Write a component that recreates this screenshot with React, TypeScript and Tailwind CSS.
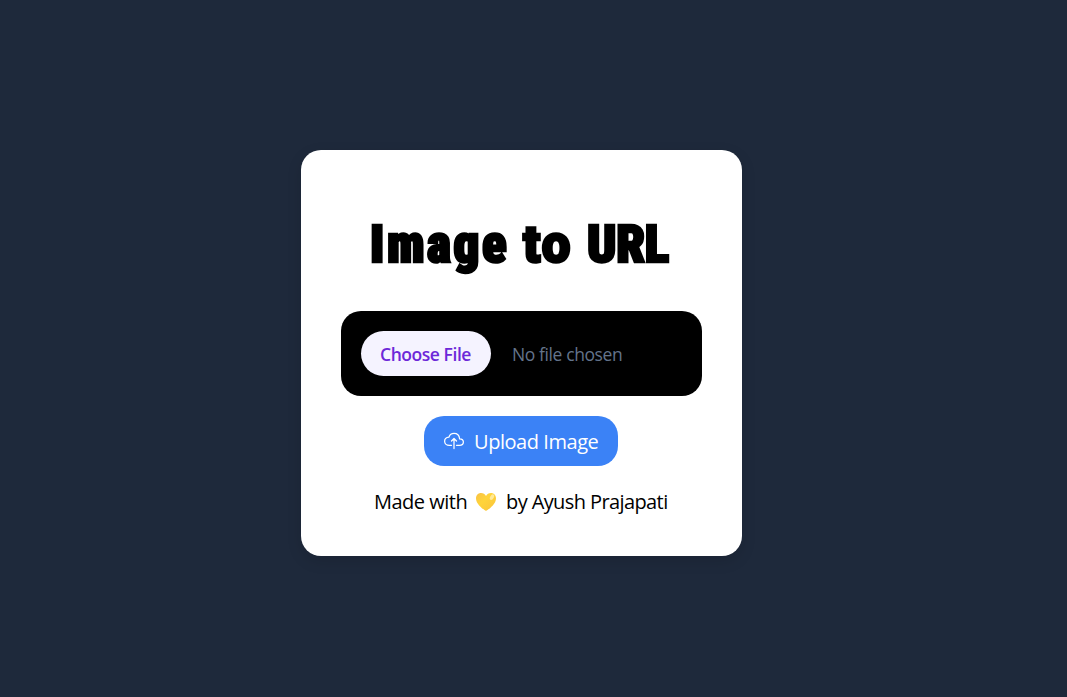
import { IoCloudUploadOutline } from 'react-icons/io5';

function YellowHeart() {
  return (
    <svg viewBox="0 0 22 20" className="w-[22px] h-5 shrink-0" aria-hidden="true">
      <defs>
        <linearGradient id="heart" x1="0" y1="0" x2="1" y2="1">
          <stop offset="0" stopColor="#f8c146" />
          <stop offset="0.4" stopColor="#ffd43a" />
          <stop offset="1" stopColor="#f9c33c" />
        </linearGradient>
      </defs>
      <path
        d="M11 19C9.7 18.2 1 12.6 1 6.4C1 3.2 3.2 1 6 1C8.3 1 10 2.2 11 4.1C12 2.2 13.7 1 16 1C18.8 1 21 3.2 21 6.4C21 12.6 12.3 18.2 11 19Z"
        fill="url(#heart)"
      />
      <ellipse cx="17" cy="5.2" rx="1.8" ry="3" transform="rotate(30 17 5.2)" fill="#ffe999" />
    </svg>
  );
}

export default function App() {
  return (
    <main className="h-[697px] bg-[#1e293b] pt-[150px] pr-6 font-['Open_Sans','Noto_Sans',sans-serif] overflow-hidden">
      <div className="w-[441px] h-[406px] mx-auto p-10 bg-white rounded-[20px] shadow-[0_5px_15px_rgba(0,0,0,0.12)] flex flex-col items-center">
        <h1 className="w-full h-[121px] shrink-0 pt-[23px] pl-[29px] flex font-['Roboto',sans-serif] text-[51px] leading-[64px] font-black text-black whitespace-nowrap [-webkit-text-stroke:2.5px_black]">
          <span className="w-[153px] tracking-[2.6px] [font-stretch:75%]">Image</span>
          <span className="w-[64px] tracking-[2px] [font-stretch:100%]">to</span>
          <span className="tracking-[-0.3px] [font-stretch:75%]">URL</span>
        </h1>

        <label className="w-full h-[85px] shrink-0 p-5 flex items-center bg-black rounded-[20px] text-[17.5px]">
          <span className="w-[130px] h-[45px] pt-px pr-px flex items-center justify-center bg-violet-50 rounded-full font-semibold text-[#6d28d9]">
            <span className="tracking-[-0.45px]">Choose File</span>
          </span>
          <span className="ml-[21px] pt-px tracking-[-0.4px] text-[#64748b]">No file chosen</span>
          <input type="file" className="hidden" />
        </label>

        <button className="mt-5 mr-px w-[194px] h-[50px] shrink-0 pl-5 flex items-center bg-[#3b82f6] rounded-[20px] text-[20px] text-white">
          <IoCloudUploadOutline className="w-5 h-5 mr-[10px]" />
          <span className="pt-px tracking-[-0.45px] whitespace-nowrap">Upload Image</span>
        </button>

        <p className="mt-[21px] h-[30px] shrink-0 w-full pl-[33px] flex items-center text-[20px] leading-[30px] text-black whitespace-nowrap">
          <span className="w-[101px] tracking-[-0.5px]">Made with</span>
          <YellowHeart />
          <span className="ml-[9px] tracking-[-0.6px]">by Ayush Prajapati</span>
        </p>
      </div>
    </main>
  );
}
